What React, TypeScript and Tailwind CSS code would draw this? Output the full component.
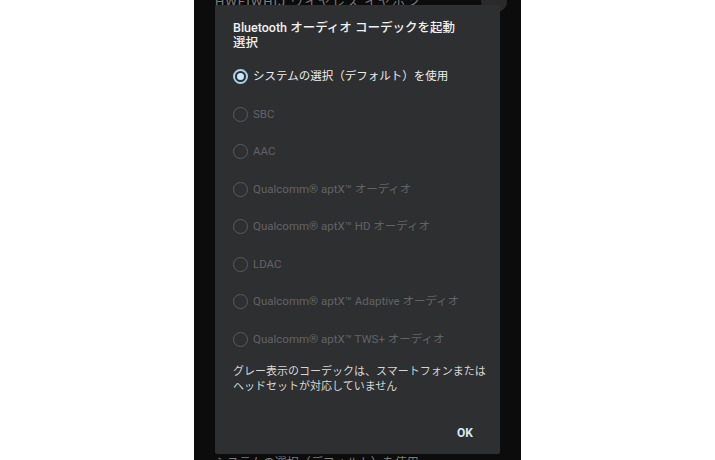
import React from 'react'

const CODECS = [
  { label: 'システムの選択（デフォルト）を使用', enabled: true, selected: true },
  { label: 'SBC', enabled: false },
  { label: 'AAC', enabled: false },
  { label: 'Qualcomm® aptX™ オーディオ', enabled: false },
  { label: 'Qualcomm® aptX™ HD オーディオ', enabled: false },
  { label: 'LDAC', enabled: false },
  { label: 'Qualcomm® aptX™ Adaptive オーディオ', enabled: false },
  { label: 'Qualcomm® aptX™ TWS+ オーディオ', enabled: false },
]

function Radio({ selected, enabled }: { selected?: boolean; enabled: boolean }) {
  if (selected) {
    return (
      <span className="w-[15px] h-[15px] rounded-full border-2 border-[#a6d0ec] flex items-center justify-center shrink-0">
        <span className="w-[7px] h-[7px] rounded-full bg-[#cbe6f7]" />
      </span>
    )
  }
  return (
    <span
      className={`w-[15px] h-[15px] rounded-full border-[1.5px] shrink-0 ${
        enabled ? 'border-[#bdbdbd]' : 'border-[#5a5b5e]'
      }`}
    />
  )
}

export default function App() {
  return (
    <div className="w-[715px] h-[460px] bg-white flex justify-center font-[Roboto,'Noto_Sans_CJK_JP',sans-serif]">
      <div className="relative w-[327px] h-full bg-[#0c0c0c] overflow-hidden">
        {/* settings screen behind the dialog */}
        <div className="h-full flex flex-col justify-between pl-[21px] pr-[14px]">
          <div className="flex items-center justify-between -mt-[8px]">
            <span className="text-[13px] leading-[16px] text-[#7c7c7c] tracking-[1px]">HWEIWHIJ ワイヤレス イヤホン</span>
            <span className="w-[26px] h-[20px] rounded-full bg-[#2a2a2c]" />
          </div>
          <span className="text-[12px] leading-[14px] text-[#7c7c7c] -mb-[10px]">システムの選択（デフォルト）を使用</span>
        </div>

        {/* codec dialog */}
        <div className="absolute left-[21px] right-[21px] top-[5px] h-[449px] bg-[#2e2f31] rounded-[2px] flex flex-col pl-[18px] pr-[8px] pt-[15px]">
          <h2 className="text-[12.5px] leading-[15px] font-medium text-[#f1f1f1]">
            Bluetooth オーディオ コーデックを起動
            <br />
            選択
          </h2>

          <div className="flex flex-col mt-[8px]">
            {CODECS.map((c) => (
              <div key={c.label} className="h-[37.5px] flex items-center gap-[5px]">
                <Radio selected={c.selected} enabled={c.enabled} />
                <span
                  className={`text-[11.5px] whitespace-nowrap ${
                    c.enabled ? 'text-[#ececec]' : 'text-[#626366]'
                  }`}
                >
                  {c.label}
                </span>
              </div>
            ))}
          </div>

          <p className="mt-[6px] text-[11px] leading-[15px] text-[#d6d6d6] whitespace-nowrap">
            グレー表示のコーデックは、スマートフォンまたは
            <br />
            ヘッドセットが対応していません
          </p>

          <div className="mt-auto mb-[12px] flex justify-end pr-[19px]">
            <span className="text-[12px] font-bold text-[#d9e9f3]">OK</span>
          </div>
        </div>
      </div>
    </div>
  )
}
